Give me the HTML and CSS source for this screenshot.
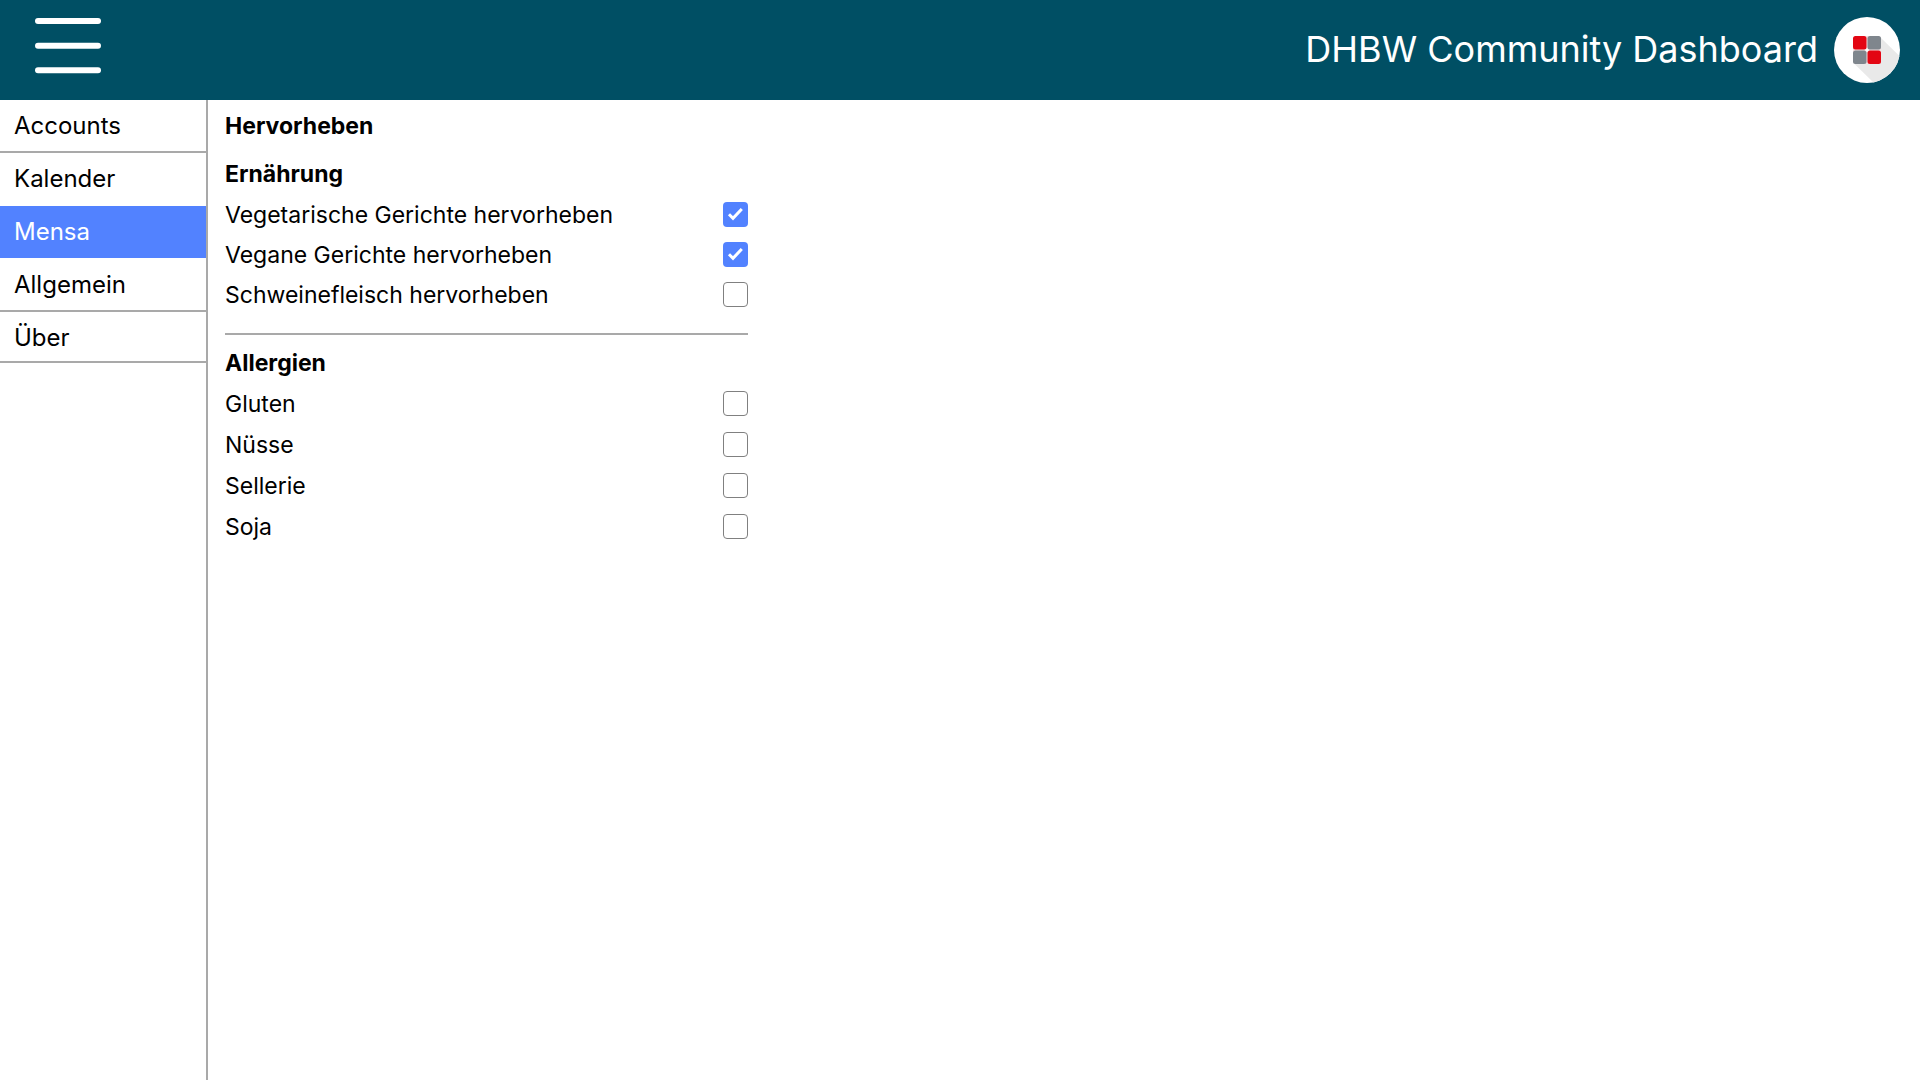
FILE: index.html
```html
<!DOCTYPE html>
<html lang="de">
<head>
<meta charset="utf-8">
<meta name="viewport" content="width=device-width, initial-scale=1">
<title>DHBW Community Dashboard</title>
<link rel="stylesheet" href="styles.css">
</head>
<body>
<header class="topbar">
  <button class="menu-button" type="button" aria-label="Menü">
    <svg class="menu-icon" viewBox="0 0 66 56" aria-hidden="true">
      <rect x="0" y="0" width="66" height="6" rx="3"/>
      <rect x="0" y="24.7" width="66" height="6" rx="3"/>
      <rect x="0" y="49.3" width="66" height="6" rx="3"/>
    </svg>
  </button>
  <div class="brand">
    <span class="brand-name">DHBW Community Dashboard</span>
    <svg class="logo" viewBox="0 0 66 66" aria-hidden="true">
      <clipPath id="disc"><circle cx="33" cy="33" r="33"/></clipPath>
      <g clip-path="url(#disc)">
        <rect width="66" height="66" fill="#fff"/>
        <path d="M46 20L66 39.500V66H40L19.500 46Z" fill="#e9e9e9"/>
        <rect x="19" y="19" width="28" height="28" rx="3" fill="#f1dede"/>
        <rect x="19" y="19" width="13.500" height="13.500" rx="2.500" fill="#e30613"/>
        <rect x="33.500" y="19" width="13.500" height="13.500" rx="2.500" fill="#7f868d"/>
        <rect x="19" y="33.500" width="13.500" height="13.500" rx="2.500" fill="#7f868d"/>
        <rect x="33.500" y="33.500" width="13.500" height="13.500" rx="2.500" fill="#e30613"/>
        <circle cx="33" cy="33" r="1.600" fill="#fff"/>
      </g>
    </svg>
  </div>
</header>
<div class="layout">
  <nav class="sidebar" aria-label="Einstellungen">
    <a class="nav-item" href="#accounts">Accounts</a>
    <a class="nav-item before-active" href="#kalender">Kalender</a>
    <a class="nav-item active" href="#mensa" aria-current="page">Mensa</a>
    <a class="nav-item" href="#allgemein">Allgemein</a>
    <a class="nav-item last" href="#ueber">Über</a>
  </nav>
  <main class="content">
    <h1 class="heading">Hervorheben</h1>
    <section class="group">
      <h2 class="heading">Ernährung</h2>
      <div class="options compact">
        <div class="option"><label for="vegetarisch">Vegetarische Gerichte hervorheben</label><input class="check" type="checkbox" id="vegetarisch" checked></div>
        <div class="option"><label for="vegan">Vegane Gerichte hervorheben</label><input class="check" type="checkbox" id="vegan" checked></div>
        <div class="option"><label for="schwein">Schweinefleisch hervorheben</label><input class="check" type="checkbox" id="schwein"></div>
      </div>
    </section>
    <hr class="divider">
    <section class="group">
      <h2 class="heading">Allergien</h2>
      <div class="options">
        <div class="option"><label for="gluten">Gluten</label><input class="check" type="checkbox" id="gluten"></div>
        <div class="option"><label for="nuesse">Nüsse</label><input class="check" type="checkbox" id="nuesse"></div>
        <div class="option"><label for="sellerie">Sellerie</label><input class="check" type="checkbox" id="sellerie"></div>
        <div class="option"><label for="soja">Soja</label><input class="check" type="checkbox" id="soja"></div>
      </div>
    </section>
  </main>
</div>
</body>
</html>
```
FILE: styles.css
```css
* {
  box-sizing: border-box;
}

body {
  margin: 0;
  min-height: 100vh;
  display: flex;
  flex-direction: column;
  background: #fff;
  color: #000;
  font-family: Inter, "Liberation Sans", sans-serif;
  font-size: 24px;
  line-height: 29px;
}

.topbar {
  height: 100px;
  padding: 0 20px 0 35px;
  display: flex;
  justify-content: space-between;
  background: #004f64;
  color: #fff;
}

.menu-button {
  align-self: flex-start;
  margin-top: 18px;
  padding: 0;
  border: 0;
  background: none;
  cursor: pointer;
}

.menu-icon {
  display: block;
  width: 66px;
  height: 56px;
  fill: #fff;
}

.brand {
  display: flex;
  align-items: center;
  gap: 16px;
}

.brand-name {
  padding-bottom: 2px;
  font-size: 36px;
  line-height: 44px;
}

.logo {
  display: block;
  width: 66px;
  height: 66px;
}

.layout {
  flex: 1;
  display: flex;
}

.sidebar {
  width: 208px;
  flex-shrink: 0;
  border-right: 2px solid #a9a9a9;
}

.nav-item {
  display: block;
  height: 53px;
  padding: 11px 14px;
  border-bottom: 2px solid #a9a9a9;
  color: inherit;
  text-decoration: none;
}

.nav-item.before-active {
  border-bottom-color: transparent;
}

.nav-item.active {
  height: 52px;
  margin-bottom: 1px;
  border-bottom: 0;
  background: #5282ff;
  color: #fff;
}

.nav-item.last {
  height: 51px;
}

.content {
  width: 540px;
  padding: 11px 0 0 17px;
  font-size: 23px;
  line-height: 31px;
}

.heading {
  margin: 0;
  font-size: 23px;
  font-weight: 700;
  line-height: 31px;
}

h1.heading {
  margin-bottom: 17px;
}

.group,
.options {
  display: flex;
  flex-direction: column;
  gap: 10px;
}

.options.compact {
  gap: 9px;
}

.option {
  display: flex;
  justify-content: space-between;
}

.check {
  appearance: none;
  width: 25px;
  height: 25px;
  margin: 2px 0 0;
  border: 1px solid #808080;
  border-radius: 4px;
  background: #fff;
}

.check:checked {
  border: 0;
  background: #5282ff url("data:image/svg+xml,%3Csvg xmlns='http://www.w3.org/2000/svg' viewBox='0 0 25 25'%3E%3Cpath d='M6 12.300L10 16.300L18.800 7' fill='none' stroke='%23fff' stroke-width='3'/%3E%3C/svg%3E");
}

.divider {
  height: 2px;
  margin: 22px 0 13px;
  border: 0;
  background: #a9a9a9;
}
```
